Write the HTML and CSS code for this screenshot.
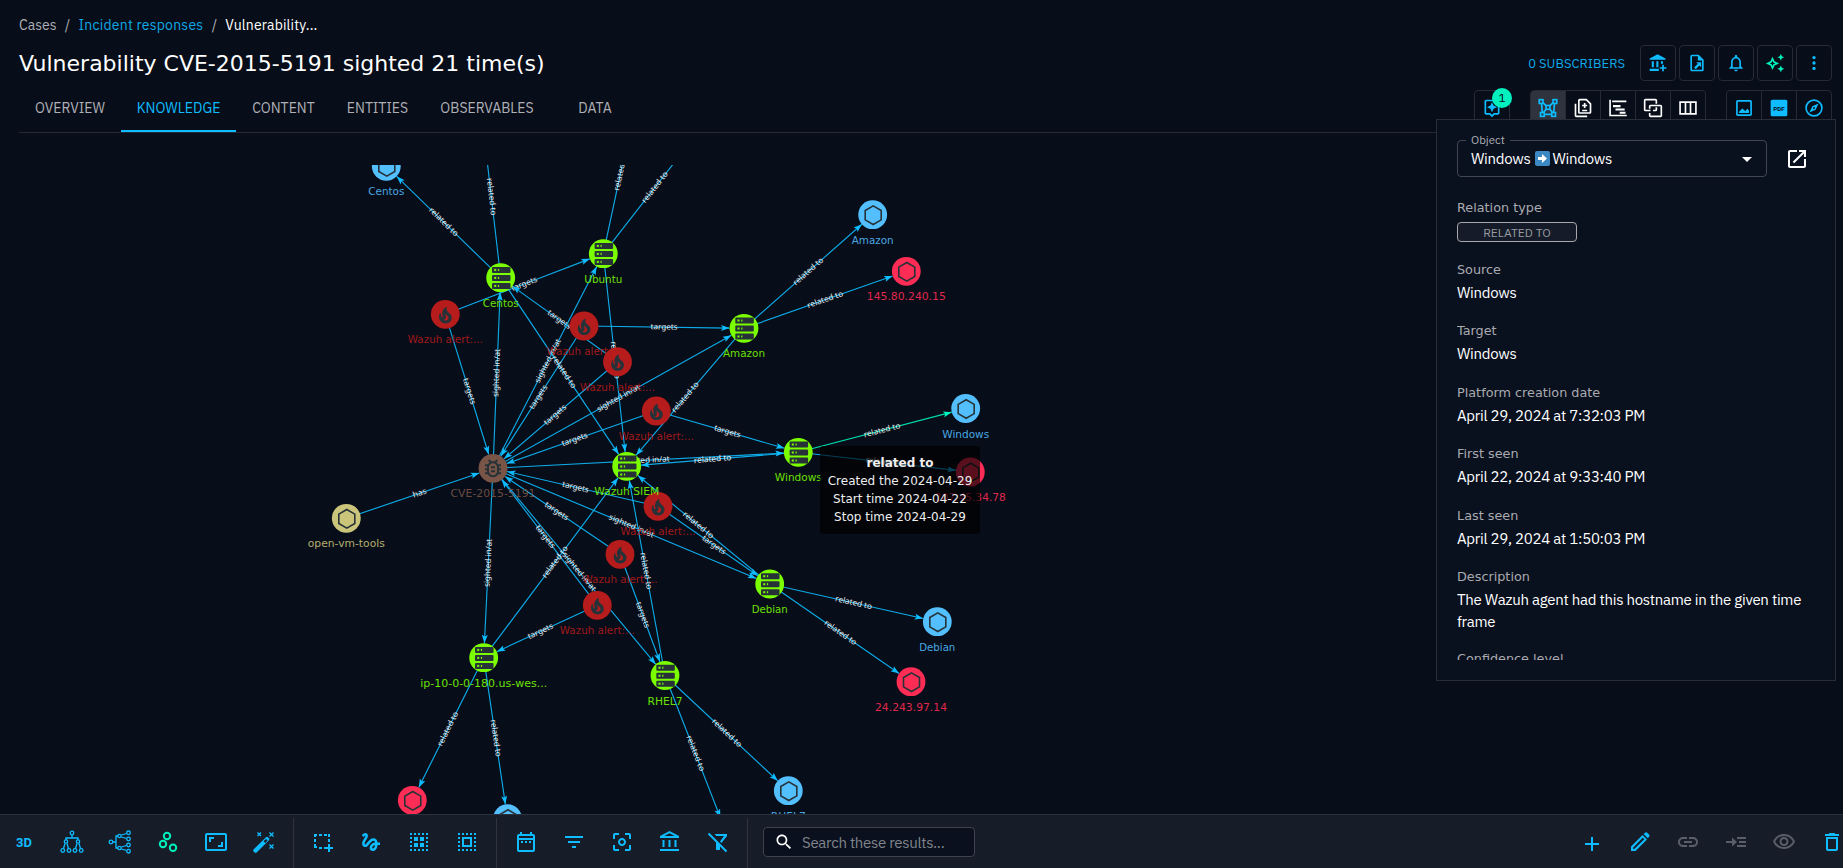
FILE: index.html
```html
<!DOCTYPE html>
<html lang="en">
<head>
<meta charset="utf-8">
<title>Vulnerability CVE-2015-5191</title>
<link rel="stylesheet" href="styles.css">
</head>
<body>
<div class="page">
  <header class="header">
    <nav class="breadcrumb">
      <span class="crumb">Cases</span><span class="sep">/</span><a class="crumb-link">Incident responses</a><span class="sep">/</span><span class="crumb-current">Vulnerability...</span>
    </nav>
    <div class="title-row">
      <h1 class="title">Vulnerability CVE-2015-5191 sighted 21 time(s)</h1>
      <div class="actions">
        <span class="subscribers">0 SUBSCRIBERS</span>
        <button class="box-btn"><svg viewBox="0 0 24 24"><path d="M2 6.500 11.500 1.500 21 6.500V8H2zM4.500 10h2.500v7H4.500zM10 10h2.500v7H10zM15.500 10H18v3h-2.500zM2 19h11v2.500H2zM17 14h2v3h3v2h-3v3h-2v-3h-3v-2h3z"/></svg></button>
        <button class="box-btn"><svg viewBox="0 0 24 24"><path d="M14 2H6c-1.100 0-2 .9-2 2v16c0 1.100.9 2 2 2h12c1.100 0 2-.9 2-2V8zM6 20V4h7v5h5v11z"/><path d="M11 11h6v6l-2-2-4.500 4.500-2-2L13 13z"/></svg></button>
        <button class="box-btn"><svg viewBox="0 0 24 24"><path d="M12 22c1.100 0 2-.9 2-2h-4c0 1.100.89 2 2 2zm6-6v-5c0-3.070-1.640-5.640-4.500-6.320V4c0-.83-.67-1.500-1.500-1.500s-1.500.67-1.500 1.500v.68C7.630 5.360 6 7.920 6 11v5l-2 2v1h16v-1l-2-2zm-2 1H8v-6c0-2.480 1.510-4.500 4-4.500s4 2.020 4 4.500v6z"/></svg></button>
        <button class="box-btn mint"><svg viewBox="0 0 24 24"><path fill-rule="evenodd" d="M9 4.500 11.500 10 17 12.500 11.500 15 9 20.500 6.500 15 1 12.500 6.500 10zM9 9.300 8 11.500 5.800 12.500 8 13.500 9 15.700 10 13.500 12.200 12.500 10 11.500zM19 1l1.250 2.750L23 5l-2.750 1.250L19 9l-1.250-2.750L15 5l2.750-1.250zM19 15l1.250 2.750L23 19l-2.750 1.250L19 23l-1.250-2.750L15 19l2.750-1.250z"/></svg></button>
        <button class="box-btn"><svg viewBox="0 0 24 24"><circle cx="12" cy="5.500" r="2"/><circle cx="12" cy="12" r="2"/><circle cx="12" cy="18.500" r="2"/></svg></button>
      </div>
    </div>
    <div class="tab-row">
      <nav class="tabs">
        <span class="tab tab-overview">OVERVIEW</span>
        <span class="tab tab-knowledge active">KNOWLEDGE</span>
        <span class="tab tab-content">CONTENT</span>
        <span class="tab tab-entities">ENTITIES</span>
        <span class="tab tab-observables">OBSERVABLES</span>
        <span class="tab tab-data">DATA</span>
      </nav>
      <div class="views">
        <button class="box-btn ai"><svg viewBox="0 0 24 24"><path d="M19 2H5c-1.100 0-2 .9-2 2v14c0 1.100.9 2 2 2h4l3 3 3-3h4c1.100 0 2-.9 2-2V4c0-1.100-.9-2-2-2zm0 16h-4.800L12 20.200 9.800 18H5V4h14z"/><path d="m12 17 1.900-4.100L18 11l-4.100-1.900L12 5l-1.900 4.100L6 11l4.100 1.900z"/></svg><span class="badge">1</span></button>
        <div class="btn-group">
          <button class="grp-btn selected"><svg viewBox="0 0 24 24"><g fill="none" stroke="currentColor" stroke-width="2"><rect x="1.500" y="2" width="4.500" height="4.500"/><rect x="18" y="2" width="4.500" height="4.500"/><rect x="3" y="17.500" width="4.500" height="4.500"/><rect x="16.500" y="17.500" width="4.500" height="4.500"/><rect x="9.700" y="9" width="4.600" height="4.600"/><path d="M4.200 6.500 5.200 17.500M19.800 6.500 18.800 17.500M7.500 19.700h9M6 5.500l3.700 4M18 5.500l-3.700 4M9.700 13.500l-3 4M14.300 13.500l3 4"/></g></svg></button>
          <button class="grp-btn"><svg viewBox="0 0 24 24"><g fill="none" stroke="currentColor" stroke-width="2"><path d="M7 3q0-1 1-1h8l5 5v10q0 1-1 1H8q-1 0-1-1zM3 7v14q0 1 1 1h13M14 6v6M11 9h6M11 15h6"/></g></svg></button>
          <button class="grp-btn"><svg viewBox="0 0 24 24"><path d="M1.500 2h2v18h19v2h-21zM5 3h17v2H5zM6 8.500h9V11H6zM9 12.500h11V15H9zM14 16.500h7V19h-7z"/></svg></button>
          <button class="grp-btn"><svg viewBox="0 0 24 24"><g fill="none" stroke="currentColor" stroke-width="2"><path d="M9 15H3q-1 0-1-1V3q0-1 1-1h12q1 0 1 1v4M8 13v-3q0-1 1-1h12q1 0 1 1v11q0 1-1 1H9q-1 0-1-1v-3M16 11v3q0 1-1 1h-3"/></g></svg></button>
          <button class="grp-btn"><svg viewBox="0 0 24 24"><g fill="none" stroke="currentColor" stroke-width="2"><path d="M2.500 5h19v14h-19zM9 5v14M15 5v14"/></g></svg></button>
        </div>
        <div class="btn-group exports">
          <button class="grp-btn"><svg viewBox="0 0 24 24"><path d="M19.500 2.500h-15c-1.100 0-2 .9-2 2v15c0 1.100.9 2 2 2h15c1.100 0 2-.9 2-2v-15c0-1.100-.9-2-2-2zm0 17h-15v-15h15zM6 18h12v-3l-2-2-2.500 2.500L10 12.500l-4 4z"/></svg></button>
          <button class="grp-btn"><svg viewBox="0 0 24 24"><rect x="2" y="2" width="20" height="20" rx="2"/><text x="12" y="15" class="pdf-text">PDF</text></svg></button>
          <button class="grp-btn"><svg viewBox="0 0 24 24"><circle cx="12" cy="12" r="9.500" fill="none" stroke="currentColor" stroke-width="2"/><path fill-rule="evenodd" d="M17.500 6.500 14 14l-7.500 3.500L10 10zM12 10.900a1.100 1.100 0 1 0 0 2.200 1.100 1.100 0 0 0 0-2.200z"/></svg></button>
        </div>
      </div>
    </div>
  </header>

  <main class="canvas">
    <svg class="graph" id="graph" viewBox="0 165 1843 649"></svg>
  </main>

  <footer class="toolbar">
    <div class="tools tools-layout">
      <span class="tool"><span class="three-d">3D</span></span>
      <span class="tool"><svg viewBox="0 0 24 24"><g class="line"><circle cx="12" cy="3" r="1.800"/><path d="M12 5v3M6 10V8h12v2M5 13.500 3.500 18.500M7 13.500l1.500 5M17 13.500l-1.500 5M19 13.500l1.500 5"/><circle cx="6" cy="11.500" r="1.700"/><circle cx="18" cy="11.500" r="1.700"/><circle cx="2.800" cy="20.500" r="1.800"/><circle cx="9" cy="20.500" r="1.800"/><circle cx="15" cy="20.500" r="1.800"/><circle cx="21.200" cy="20.500" r="1.800"/></g></svg></span>
      <span class="tool"><svg viewBox="0 0 24 24"><g class="line" transform="rotate(-90 12 12)"><circle cx="12" cy="3" r="1.800"/><path d="M12 5v3M6 10V8h12v2M5 13.500 3.500 18.500M7 13.500l1.500 5M17 13.500l-1.500 5M19 13.500l1.500 5"/><circle cx="6" cy="11.500" r="1.700"/><circle cx="18" cy="11.500" r="1.700"/><circle cx="2.800" cy="20.500" r="1.800"/><circle cx="9" cy="20.500" r="1.800"/><circle cx="15" cy="20.500" r="1.800"/><circle cx="21.200" cy="20.500" r="1.800"/></g></svg></span>
      <span class="tool mint"><svg viewBox="0 0 24 24"><g fill="none" stroke="currentColor" stroke-width="2"><circle cx="11" cy="6" r="3.200"/><circle cx="7" cy="14" r="3.200"/><circle cx="17" cy="17.700" r="3.200"/></g></svg></span>
      <span class="tool"><svg viewBox="0 0 24 24"><path d="M19 12h-2v3h-3v2h5v-5zM7 9h3V7H5v5h2V9zm14-6H3c-1.100 0-2 .9-2 2v14c0 1.100.9 2 2 2h18c1.100 0 2-.9 2-2V5c0-1.100-.9-2-2-2zm0 16.010H3V4.990h18v14.020z"/></svg></span>
      <span class="tool"><svg viewBox="0 0 24 24"><path fill-rule="evenodd" d="M1.500 19.500 14 7.200q1.200-.8 2.200.2l.6.600q1 1.100.2 2.200L4.600 22.500q-1 .8-2 0l-1.100-1.200q-.8-.9 0-1.800zM11.500 11.300l1.800 1.800 2.200-2.700-1.400-1.400z"/><path class="line" d="m5.500 2.500 3.500 3.500M9 2.500 5.500 6M17.500 2.500 21.500 6.500M21.500 2.500l-4 4M17.500 14.500l4 4M21.500 14.500l-4 4"/></svg></span>
    </div>
    <div class="tools tools-select">
      <span class="tool"><svg viewBox="0 0 24 24"><path d="M3 4h3v2H5v1H3zM8 4h3v2H8zM13 4h3v2h-3zM17 4h2v3h-2zM3 9h2v3H3zM3 14h2v2h1v2H3zM8 17h3v2H8zM17 9h2v3h-2zM17 14h2v3h3v2h-3v3h-2v-3h-4v-2h4z"/></svg></span>
      <span class="tool"><svg viewBox="0 0 24 24"><path d="M4.590 6.890c.7-.71 1.400-1.350 1.710-1.220.5.2 0 1.030-.3 1.520-.25.42-2.860 3.890-2.860 6.310 0 1.280.48 2.340 1.340 2.980.75.56 1.740.73 2.640.46 1.070-.31 1.950-1.400 3.060-2.770 1.210-1.490 2.830-3.440 4.080-3.440 1.630 0 1.650 1.010 1.760 1.790-3.780.64-5.380 3.670-5.380 5.370s1.440 3.090 3.210 3.090c1.630 0 4.290-1.330 4.690-6.100H21v-2.500h-2.470c-.15-1.650-1.090-4.200-4.030-4.200-2.250 0-4.180 1.910-4.940 2.840-.58.73-2.060 2.480-2.290 2.720-.25.3-.68.84-1.110.84-.45 0-.72-.83-.36-1.920.35-1.090 1.400-2.860 1.850-3.520.78-1.140 1.300-1.920 1.300-3.280C8.950 3.690 7.310 3 6.440 3 5.120 3 3.970 4 3.720 4.250c-.36.36-.66.66-.88.93l1.750 1.710zm9.290 11.660c-.31 0-.74-.26-.74-.72 0-.6.73-2.200 2.870-2.760-.3 2.690-1.430 3.480-2.130 3.480z"/></svg></span>
      <span class="tool"><svg viewBox="0 0 24 24"><rect x="4" y="4" width="16" height="16" class="dots" /><path d="M7 7h4v4H7zM13 7h4v4h-4zM7 13h4v4H7zM13 13h4v4h-4z"/></svg></span>
      <span class="tool"><svg viewBox="0 0 24 24"><rect x="4" y="4" width="16" height="16" class="dots"/><rect x="8" y="8" width="8" height="8" fill="none" stroke="currentColor" stroke-width="2"/></svg></span>
    </div>
    <div class="tools tools-filter">
      <span class="tool"><svg viewBox="0 0 24 24"><path d="M7 11h2v2H7v-2zm14-5v14c0 1.100-.9 2-2 2H5c-1.110 0-2-.9-2-2l.01-14c0-1.100.88-2 1.990-2h1V2h2v2h8V2h2v2h1c1.100 0 2 .9 2 2zM5 8h14V6H5v2zm14 12V10H5v10h14zm-4-7h2v-2h-2v2zm-4 0h2v-2h-2v2z"/></svg></span>
      <span class="tool"><svg viewBox="0 0 24 24"><path d="M10 18h4v-2h-4v2zM3 6v2h18V6H3zm3 7h12v-2H6v2z"/></svg></span>
      <span class="tool"><svg viewBox="0 0 24 24"><path d="M12 8c-2.210 0-4 1.790-4 4s1.790 4 4 4 4-1.790 4-4-1.790-4-4-4zm0 6c-1.100 0-2-.9-2-2s.9-2 2-2 2 .9 2 2-.9 2-2 2zM5 15H3v4c0 1.100.9 2 2 2h4v-2H5v-4zM5 5h4V3H5c-1.100 0-2 .9-2 2v4h2V5zm14-2h-4v2h4v4h2V5c0-1.100-.9-2-2-2zm0 16h-4v2h4c1.100 0 2-.9 2-2v-4h-2v4z"/></svg></span>
      <span class="tool"><svg viewBox="0 0 24 24"><path d="M6.500 10h-2v7h2v-7zm6 0h-2v7h2v-7zm8.500 9H2v2h19v-2zm-2.500-9h-2v7h2v-7zm-7-6.740L16.710 6H6.290l5.210-2.740m0-2.260L2 6v2h19V6l-9.500-5z"/></svg></span>
      <span class="tool"><svg viewBox="0 0 24 24"><path d="M8.500 4H21v2l-5.500 7-1.500-1.500L18 6h-7.500zM10 12l4 4v4h-4zM1.800 4.200 3.200 2.800 21.200 20.800 19.800 22.200z"/></svg></span>
    </div>
    <div class="search"><svg viewBox="0 0 24 24"><path d="M15.500 14h-.79l-.28-.27C15.410 12.590 16 11.110 16 9.500 16 5.910 13.090 3 9.500 3S3 5.910 3 9.500 5.910 16 9.500 16c1.610 0 3.090-.59 4.230-1.570l.27.28v.79l5 4.990L20.490 19l-4.990-5zm-6 0C7.010 14 5 11.990 5 9.500S7.010 5 9.500 5 14 7.010 14 9.500 11.990 14 9.500 14z"/></svg><span>Search these results...</span></div>
    <div class="tools tools-edit">
      <span class="tool add"><svg viewBox="0 0 24 24"><path d="M19 13h-6v6h-2v-6H5v-2h6V5h2v6h6v2z"/></svg></span>
      <span class="tool"><svg viewBox="0 0 24 24"><path fill-rule="evenodd" d="M3 21v-4.500L14.500 5l4.500 4.500L7.500 21zM5 19l1.500-.2L16.300 9.300 14.700 7.700 5.200 17.500zM15.600 4 17.500 2.600q.9-.6 1.700.1l2 2q.7.900 0 1.700L19.900 8.300z"/></svg></span>
      <span class="tool off"><svg viewBox="0 0 24 24"><path d="M3.900 12c0-1.710 1.390-3.100 3.100-3.100h4V7H7c-2.760 0-5 2.240-5 5s2.240 5 5 5h4v-1.900H7c-1.710 0-3.100-1.390-3.100-3.100zM8 13h8v-2H8v2zm9-6h-4v1.900h4c1.710 0 3.100 1.390 3.100 3.100s-1.390 3.100-3.100 3.100h-4V17h4c2.760 0 5-2.240 5-5s-2.240-5-5-5z"/></svg></span>
      <span class="tool off"><svg viewBox="0 0 24 24"><path d="M2 11h6V7.500l5 4.500-5 4.500V13H2zM13 7h9v2h-9zM15 11h7v2h-7zM13 15h9v2h-9z"/></svg></span>
      <span class="tool off"><svg viewBox="0 0 24 24"><path d="M12 6c3.790 0 7.170 2.130 8.820 5.500C19.170 14.870 15.790 17 12 17s-7.170-2.130-8.820-5.500C4.830 8.130 8.210 6 12 6m0-2C7 4 2.730 7.110 1 11.500 2.730 15.890 7 19 12 19s9.270-3.110 11-7.500C21.270 7.110 17 4 12 4zm0 5c1.380 0 2.500 1.120 2.500 2.500S13.380 14 12 14s-2.500-1.120-2.500-2.500S10.620 9 12 9m0-2c-2.480 0-4.500 2.020-4.500 4.500S9.520 16 12 16s4.500-2.020 4.500-4.500S14.480 7 12 7z"/></svg></span>
      <span class="tool"><svg viewBox="0 0 24 24"><path d="M6 19c0 1.100.9 2 2 2h8c1.100 0 2-.9 2-2V7H6v12zM8 9h8v10H8V9zm7.500-5l-1-1h-5l-1 1H5v2h14V4z"/></svg></span>
    </div>
  </footer>

  <aside class="panel">
    <div class="panel-top">
      <div class="select"><span class="select-label">Object</span><span>Windows</span><span class="emoji"><svg viewBox="0 0 15 15"><path d="M3 6h4V3l5 4.500L7 12V9H3z"/></svg></span><span>Windows</span><svg class="caret" viewBox="0 0 24 24"><path d="m7 10 5 5 5-5z"/></svg></div>
      <svg class="open" viewBox="0 0 24 24"><path d="M19 19H5V5h7V3H5c-1.110 0-2 .9-2 2v14c0 1.100.89 2 2 2h14c1.100 0 2-.9 2-2v-7h-2v7zM14 3v2h3.590l-9.830 9.830 1.410 1.410L19 6.410V10h2V3h-7z"/></svg>
    </div>
    <div class="fields">
      <div class="field"><h3>Relation type</h3><span class="chip">RELATED TO</span></div>
      <div class="field"><h3>Source</h3><p>Windows</p></div>
      <div class="field"><h3>Target</h3><p>Windows</p></div>
      <div class="field"><h3>Platform creation date</h3><p>April 29, 2024 at 7:32:03 PM</p></div>
      <div class="field"><h3>First seen</h3><p>April 22, 2024 at 9:33:40 PM</p></div>
      <div class="field"><h3>Last seen</h3><p>April 29, 2024 at 1:50:03 PM</p></div>
      <div class="field description"><h3>Description</h3><p>The Wazuh agent had this hostname in the given time frame</p></div>
      <div class="field"><h3>Confidence level</h3></div>
    </div>
  </aside>

  <div class="tooltip"><b>related to</b><span>Created the 2024-04-29</span><span>Start time 2024-04-22</span><span>Stop time 2024-04-29</span></div>
</div>
<script src="graph.js"></script>
</body>
</html>
```
FILE: styles.css
```css
* { box-sizing: border-box; }
body { margin: 0; background: #070d19; color: #fff; font-family: "IBM Plex Sans", Roboto, sans-serif; overflow: hidden; }
svg { display: block; fill: currentColor; }
button { font: inherit; background: none; padding: 0; color: #0fbcff; display: flex; align-items: center; justify-content: center; }
.page { position: relative; width: 1843px; height: 868px; display: flex; flex-direction: column; overflow: hidden; }
.header { padding: 0 11px 0 19px; height: 133px; flex: none; }
.breadcrumb { display: flex; height: 45px; padding-top: 16px; font-size: 14px; line-height: 18px; color: #afb0b6; }
.sep { width: 22px; text-align: center; }
.crumb-link { color: #0fa9e6; letter-spacing: .22px; }
.crumb-current { color: #fff; letter-spacing: .16px; }
.title-row { display: flex; height: 36px; align-items: center; justify-content: space-between; }
.title { margin: 0; font: 400 22px "DejaVu Sans", sans-serif; white-space: nowrap; }
.actions { display: flex; align-items: center; gap: 3px; }
.subscribers { font-size: 13px; color: #0fa9e6; margin-right: 12px; }
.box-btn { width: 36px; height: 36px; border: 1px solid #252a35; border-radius: 4px; }
.box-btn svg, .grp-btn svg { width: 20px; height: 20px; }
.mint { color: #00f1bd; }
.tab-row { display: flex; justify-content: space-between; height: 52px; border-bottom: 1px solid #252934; }
.tabs { display: flex; }
.tab { display: flex; align-items: center; justify-content: center; font-size: 14px; color: #afb0b6; height: 51px; padding-top: 5px; border-bottom: 2px solid transparent; }
.tab.active { color: #0fbcff; border-color: #0fbcff; }
.tab-overview { width: 102px; } .tab-knowledge { width: 115px; } .tab-content { width: 95px; }
.tab-entities { width: 93px; } .tab-observables { width: 126px; } .tab-data { width: 90px; }
.views { display: flex; padding-top: 9px; gap: 20px; }
.ai { position: relative; }
.badge { position: absolute; left: 17px; top: -3px; width: 20px; height: 20px; border-radius: 50%; background: #00f1bd; color: #070d19; font-size: 12px; line-height: 20px; text-align: center; }
.btn-group { display: flex; height: 36px; border: 1px solid #252a35; border-radius: 4px; overflow: hidden; }
.grp-btn { width: 35px; border: 0; border-left: 1px solid #252a35; color: #fff; }
.grp-btn:first-child { border-left: 0; width: 34px; }
.grp-btn.selected { background: #2e333e; color: #0fbcff; }
.exports .grp-btn { color: #0fbcff; }
.pdf-text { font: 700 7.500px Roboto, sans-serif; fill: #070d19; text-anchor: middle; }
.canvas { flex: 1; padding-top: 32px; min-height: 0; }
.graph { width: 1843px; height: 649px; }
.node-label { font: 10.500px "DejaVu Sans", sans-serif; text-anchor: middle; opacity: .87; }
.edge-label { font: 8px "Noto Sans", sans-serif; text-anchor: middle; fill: #fff; opacity: .9; }
.toolbar { height: 54px; flex: none; display: flex; background: #171c29; border-top: 1px solid #2b303d; padding-top: 3px; }
.tools { display: flex; border-right: 1px solid #2e333f; }
.tool { width: 48px; height: 48px; display: flex; align-items: center; justify-content: center; color: #0fbcff; }
.tool svg { width: 24px; height: 24px; }
.tool.mint { color: #00f1bd; }
.tool.off { color: #5a5e68; }
.line { fill: none; stroke: currentColor; stroke-width: 1.300; }
.dots { fill: none; stroke: currentColor; stroke-width: 2; stroke-dasharray: 2 2; stroke-dashoffset: 1; }
.tools-layout { width: 294px; } .tools-select { width: 203px; padding-left: 5px; } .tools-filter { width: 251px; padding-left: 5px; }
.three-d { font: 700 13px Roboto, sans-serif; }
.search { display: flex; align-items: center; width: 212px; height: 30px; margin: 9px 0 0 15px; padding-left: 10px; border: 1px solid #3d424d; border-radius: 4px; background: #0a101d; font-size: 15px; letter-spacing: -.3px; color: #80848c; }
.search svg { width: 20px; height: 20px; margin-right: 8px; color: #fff; }
.tools-edit { margin-left: auto; border: 0; margin-right: -13px; }
.add svg { position: relative; top: 2px; }
.panel { position: absolute; left: 1436px; top: 119px; width: 400px; height: 562px; padding: 20px; background: #09101e; border: 1px solid #282d38; }
.panel-top { display: flex; align-items: center; }
.select { position: relative; display: flex; align-items: center; width: 310px; height: 37px; padding: 0 7px 0 13px; border: 1px solid #414650; border-radius: 4px; font-size: 15px; letter-spacing: -.28px; }
.select-label { position: absolute; left: 8px; top: -9px; padding: 0 5px; background: #09101e; color: #afb0b6; font-size: 11.500px; line-height: 16px; letter-spacing: 0; }
.emoji { width: 15px; height: 15px; background: #3b88c3; border-radius: 2px; margin: 0 3px 0 4px; }
.caret { width: 24px; height: 24px; margin-left: auto; }
.open { width: 24px; height: 24px; margin-left: 18px; }
.fields { height: 483px; overflow: hidden; padding-top: 21px; }
.field { height: 61.500px; }
.field h3 { margin: 0; font: 400 12.800px/20px "DejaVu Sans", sans-serif; color: #a9abb0; }
.field p { margin: 2px 0 0; font-size: 15px; line-height: 22px; letter-spacing: -.27px; }
.field.description { height: 82px; }
.chip { display: flex; align-items: center; justify-content: center; width: 120px; height: 20px; margin-top: 4px; border: 1px solid #a8a8a8; border-radius: 4px; background: #151b28; color: #999ba0; font-size: 12px; }
.tooltip { position: absolute; left: 820px; top: 446px; width: 160px; height: 88px; padding-top: 8px; border-radius: 3px; background: rgba(0,0,0,.65); display: flex; flex-direction: column; align-items: center; font: 12px/18px "DejaVu Sans", sans-serif; color: #eee; white-space: nowrap; }
```
FILE: graph.js
```js
const GREEN = '#7bff00', BLUE = '#54bfff', RED = '#ff2d55', DARK = '#b71c1c';
const W = 'Wazuh alert:...';

// id: [x, y, colour, icon, label, label width]
const nodes = {
  cve: [493, 468.3, '#795548', 'bug', 'CVE-2015-5191', 85],
  a1: [445.3, 314.3, DARK, 'fire', W, 75],
  a2: [584, 326, DARK, 'fire', W, 75],
  a3: [617.5, 361.7, DARK, 'fire', W, 75],
  a4: [656.3, 411, DARK, 'fire', W, 75],
  a5: [658, 506.3, DARK, 'fire', W, 75],
  a6: [620, 554.3, DARK, 'fire', W, 75],
  a7: [597.3, 605.3, DARK, 'fire', W, 75],
  centos: [500.7, 277.7, GREEN, 'server', 'Centos', 36],
  ubuntu: [603.3, 253.7, GREEN, 'server', 'Ubuntu', 38],
  amazon: [744, 328.3, GREEN, 'server', 'Amazon', 42],
  windows: [798.3, 452.3, GREEN, 'server', 'Windows', 47],
  debian: [769.7, 584, GREEN, 'server', 'Debian', 36],
  rhel: [665, 675.5, GREEN, 'server', 'RHEL7', 35],
  ip: [483.7, 657.7, GREEN, 'server', 'ip-10-0-0-180.us-wes...', 127],
  siem: [626.7, 466.3, GREEN, 'server', 'Wazuh SIEM', 65],
  centosName: [386.3, 166.3, BLUE, 'hex', 'Centos', 36],
  amazonName: [872.7, 214.7, BLUE, 'hex', 'Amazon', 42],
  amazonIp: [906.3, 271.3, RED, 'hex', '145.80.240.15', 79],
  windowsName: [965.7, 408.5, BLUE, 'hex', 'Windows', 47],
  windowsIp: [970.3, 472, RED, 'hex', '207.45.34.78', 71],
  debianName: [937.3, 621.7, BLUE, 'hex', 'Debian', 36],
  debianIp: [911, 681.7, RED, 'hex', '24.243.97.14', 72],
  rhelName: [788.3, 790.7, BLUE, 'hex', 'RHEL7', 35],
  ipIp: [412.3, 800.3, RED, 'hex', '', 0],
  ipName: [507.5, 818.6, BLUE, 'hex', '', 0],
  tools: [346.3, 518.3, '#cbc57c', 'hex', 'open-vm-tools', 77],
  centosIp: [481.9, 115.7],
  ubuntuName: [638.2, 90.6],
  ubuntuIp: [706.7, 121],
  rhelIp: [725.6, 831]
};

const T = 'targets', R = 'related to', S = 'sighted in/at';
const edges = [
  ['a1', 'ubuntu', T], ['a1', 'cve', T], ['a2', 'cve', T], ['a2', 'amazon', T],
  ['a3', 'centos', T], ['a3', 'cve', T], ['a4', 'cve', T], ['a4', 'windows', T],
  ['a5', 'cve', T], ['a5', 'debian', T], ['a6', 'cve', T], ['a6', 'rhel', T],
  ['a7', 'cve', T], ['a7', 'ip', T], ['tools', 'cve', 'has'],
  ['cve', 'centos', S], ['cve', 'ubuntu', S], ['cve', 'amazon', S], ['cve', 'windows', S],
  ['cve', 'debian', S], ['cve', 'rhel', S], ['cve', 'ip', S],
  ['centos', 'siem', R], ['ubuntu', 'siem', R], ['amazon', 'siem', R], ['windows', 'siem', R],
  ['debian', 'siem', R], ['ip', 'siem', R], ['rhel', 'siem', R],
  ['centos', 'centosName', R], ['centos', 'centosIp', R], ['ubuntu', 'ubuntuName', R], ['ubuntu', 'ubuntuIp', R],
  ['amazon', 'amazonName', R], ['amazon', 'amazonIp', R], ['windows', 'windowsName', R, '#00f1bd'],
  ['windows', 'windowsIp', R], ['debian', 'debianName', R], ['debian', 'debianIp', R],
  ['rhel', 'rhelName', R], ['rhel', 'rhelIp', R], ['ip', 'ipIp', R], ['ip', 'ipName', R]
];
const edgeWidths = { [T]: 27, [R]: 37.5, [S]: 48, has: 14 };

const ink = '#263238';
const icons = {
  hex: () => `<path d="M0-9.300 8-4.650V4.650L0 9.300-8 4.650V-4.650Z" transform="translate(.5 .5)" fill="none" stroke="${ink}" stroke-width="1.600"/>`,
  server: () => [-10.8, -2.8, 5.2].map(y =>
    `<rect x="-8.700" y="${y}" width="18.500" height="6" rx="1" fill="${ink}"/>` +
    `<rect x="-6.500" y="${y + 2}" width="2" height="2" fill="${GREEN}"/><rect x="-2.800" y="${y + 2}" width="1.200" height="2" fill="${GREEN}"/>`).join(''),
  fire: () => `<path transform="translate(-9.500 -8.500) scale(.8)" transform-origin="0 0" fill="${ink}" fill-rule="evenodd" d="M19.480 12.350c-1.570-4.080-7.160-4.300-5.810-10.230.1-.44-.37-.78-.75-.55C9.290 3.710 6.680 8 8.870 13.620c.18.46-.36.89-.75.59-1.810-1.370-2-3.340-1.840-4.750.06-.52-.62-.77-.91-.34C4.690 10.160 4 11.840 4 14.370c.38 5.600 5.110 7.320 6.810 7.540 2.430.31 5.060-.14 6.950-1.870 2.080-1.930 2.840-5.010 1.720-7.690zm-9.280 5.030c1.440-.35 2.180-1.390 2.380-2.310.33-1.430-.96-2.830-.09-5.090.33 1.870 3.270 3.040 3.270 5.080.08 2.530-2.660 4.700-5.560 2.320z"/>`,
  bug: () => `<path transform="translate(-12 -12)" fill="${ink}" fill-rule="evenodd" d="M20 8h-2.810c-.45-.78-1.070-1.450-1.820-1.960L17 4.410 15.590 3l-2.170 2.170C12.960 5.060 12.490 5 12 5s-.96.06-1.410.17L8.410 3 7 4.410l1.620 1.630C7.880 6.550 7.260 7.220 6.810 8H4v2h2.090c-.05.33-.09.66-.09 1v1H4v2h2v1c0 .34.04.67.09 1H4v2h2.810c1.040 1.790 2.970 3 5.190 3s4.150-1.210 5.190-3H20v-2h-2.090c.05-.33.09-.66.09-1v-1h2v-2h-2v-1c0-.34-.04-.67-.09-1H20V8zm-4 4v3c0 2.210-1.790 4-4 4s-4-1.790-4-4v-4c0-2.210 1.790-4 4-4s4 1.790 4 4v1zm-6 2h4v2h-4v-2zm0-4h4v2h-4v-2z"/>`
};

const radius = 14.4;
let out = '';
for (const [from, to, label, color = '#0fbcff'] of edges) {
  const [x1, y1] = nodes[from], [x2, y2] = nodes[to];
  const angle = Math.atan2(y2 - y1, x2 - x1);
  const tx = x2 - radius * Math.cos(angle), ty = y2 - radius * Math.sin(angle);
  const deg = angle * 180 / Math.PI;
  const readable = deg > 90 ? deg - 180 : deg < -90 ? deg + 180 : deg;
  out += `<line x1="${x1}" y1="${y1}" x2="${tx}" y2="${ty}" stroke="${color}" stroke-width="1.150" opacity=".9"/>`;
  out += `<path d="M0 0-8.500-3-6.800 0-8.500 3Z" fill="${color}" transform="translate(${tx} ${ty}) rotate(${deg})"/>`;
  out += `<text class="edge-label" textLength="${edgeWidths[label]}" lengthAdjust="spacingAndGlyphs" transform="translate(${(x1 + x2) / 2} ${(y1 + y2) / 2}) rotate(${readable})" y="2.300">${label}</text>`;
}
for (const [x, y, color, icon, label, width] of Object.values(nodes)) {
  if (!icon) continue;
  out += `<g transform="translate(${x} ${y})"><circle r="${radius}" fill="${color}"/>${icons[icon]()}`;
  if (label) out += `<text class="node-label" y="29" fill="${color}" textLength="${width}" lengthAdjust="spacingAndGlyphs">${label}</text>`;
  out += '</g>';
}
document.getElementById('graph').innerHTML = out;
```
